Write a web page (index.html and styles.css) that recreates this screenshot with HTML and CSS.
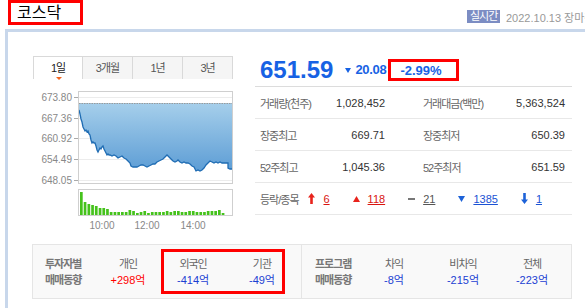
FILE: index.html
```html
<!DOCTYPE html>
<html>
<head>
  <title>코스닥</title>
  <link rel="stylesheet" href="styles.css">
</head>
<body>
  <div class="header">
    <h1 class="title">코스닥</h1>
    <div class="meta">
      <span class="badge">실시간</span>
      <span class="date">2022.10.13 장마감</span>
    </div>
  </div>

  <div class="board">
    <div class="top">
      <div class="chart-col">
        <div class="tabs">
          <div class="tab active">1일</div>
          <div class="tab">3개월</div>
          <div class="tab">1년</div>
          <div class="tab">3년</div>
        </div>
        <svg class="chart" width="200" height="150" viewBox="33 83 200 150">
          <defs>
            <linearGradient id="areaFill" x1="0" y1="0" x2="0" y2="1">
              <stop offset="0" stop-color="#a6cfeb"/>
              <stop offset="1" stop-color="#5d9dd5"/>
            </linearGradient>
          </defs>
          <!-- grid -->
          <g stroke="#ececec">
            <line x1="79" x2="232" y1="97.5" y2="97.5"/>
            <line x1="79" x2="232" y1="118.5" y2="118.5"/>
            <line x1="79" x2="232" y1="138.5" y2="138.5"/>
            <line x1="79" x2="232" y1="159.5" y2="159.5"/>
            <line x1="79" x2="232" y1="180.5" y2="180.5"/>
          </g>
          <g stroke="#aaa">
            <line x1="74" x2="78" y1="97.5" y2="97.5"/>
            <line x1="74" x2="78" y1="118.5" y2="118.5"/>
            <line x1="74" x2="78" y1="138.5" y2="138.5"/>
            <line x1="74" x2="78" y1="159.5" y2="159.5"/>
            <line x1="74" x2="78" y1="180.5" y2="180.5"/>
          </g>
          <g class="axis" text-anchor="end">
            <text x="72" y="101">673.80</text>
            <text x="72" y="122">667.36</text>
            <text x="72" y="142">660.92</text>
            <text x="72" y="163">654.49</text>
            <text x="72" y="184">648.05</text>
          </g>
          <!-- price -->
          <path fill="url(#areaFill)" d="M79,103 L79,110 80,114 81,119 82,122 83,127 84,129 85,131 86,130 87,132 88,131 89,134 90,135 91,140 92,143 93,142 94,143 95,143 96,146 97,150 98,152 99,150 100,148 101,149 102,147 103,146 104,149 105,151 106,153 107,155 108,154 109,155 110,155 112,156 114,155 116,156 118,158 120,157 122,156 124,158 126,159 128,161 130,163 131,166 133,167 135,167 137,167 139,166 141,165 143,165 145,166 147,167 149,166 151,165 153,164 155,164 157,162 159,161 161,160 163,159 165,157 167,155 169,157 171,159 173,161 175,162 177,161 178,160 180,162 182,163 184,162 186,163 188,163 190,164 192,166 194,167 196,171 198,170 200,171 202,170 204,168 206,165 208,163 210,161 212,162 214,163 216,162 218,163 220,162 222,163 224,163 226,163 228,163 228,168 230,169 232,169 L232,103 Z"/>
          <path fill="none" stroke="#1f6cb3" stroke-width="1.3" d="M79,110 80,114 81,119 82,122 83,127 84,129 85,131 86,130 87,132 88,131 89,134 90,135 91,140 92,143 93,142 94,143 95,143 96,146 97,150 98,152 99,150 100,148 101,149 102,147 103,146 104,149 105,151 106,153 107,155 108,154 109,155 110,155 112,156 114,155 116,156 118,158 120,157 122,156 124,158 126,159 128,161 130,163 131,166 133,167 135,167 137,167 139,166 141,165 143,165 145,166 147,167 149,166 151,165 153,164 155,164 157,162 159,161 161,160 163,159 165,157 167,155 169,157 171,159 173,161 175,162 177,161 178,160 180,162 182,163 184,162 186,163 188,163 190,164 192,166 194,167 196,171 198,170 200,171 202,170 204,168 206,165 208,163 210,161 212,162 214,163 216,162 218,163 220,162 222,163 224,163 226,163 228,163 228,168 230,169 232,169"/>
          <line x1="79" x2="232" y1="103.5" y2="103.5" stroke="#9a9a9a" stroke-dasharray="1.5 1"/>
          <rect x="78.5" y="91.5" width="154" height="92" fill="none" stroke="#cfcfcf"/>
          <!-- volume -->
          <rect x="78.5" y="189.5" width="154" height="26" fill="none" stroke="#cfcfcf"/>
          <g fill="#45c21c">
            <rect x="80" y="192" width="2.7" height="23"/>
            <rect x="83.7" y="202" width="2.7" height="13"/>
            <rect x="87.5" y="204" width="2.7" height="11"/>
            <rect x="91.2" y="205" width="2.7" height="10"/>
            <rect x="94.9" y="206" width="2.7" height="9"/>
            <rect x="98.7" y="208" width="2.7" height="7"/>
            <rect x="102.4" y="208" width="2.7" height="7"/>
            <rect x="106.1" y="209" width="2.7" height="6"/>
            <rect x="109.8" y="212" width="2.7" height="3"/>
            <rect x="113.6" y="212" width="2.7" height="3"/>
            <rect x="117.3" y="212" width="2.7" height="3"/>
            <rect x="121" y="212" width="2.7" height="3"/>
            <rect x="124.8" y="212" width="2.7" height="3"/>
            <rect x="128.5" y="210" width="2.7" height="5"/>
            <rect x="132.2" y="211" width="2.7" height="4"/>
            <rect x="136" y="213" width="2.7" height="2"/>
            <rect x="139.7" y="212" width="2.7" height="3"/>
            <rect x="143.4" y="211" width="2.7" height="4"/>
            <rect x="147.1" y="213" width="2.7" height="2"/>
            <rect x="150.9" y="212" width="2.7" height="3"/>
            <rect x="154.6" y="212" width="2.7" height="3"/>
            <rect x="158.3" y="212" width="2.7" height="3"/>
            <rect x="162.1" y="212" width="2.7" height="3"/>
            <rect x="165.8" y="211" width="2.7" height="4"/>
            <rect x="169.5" y="212" width="2.7" height="3"/>
            <rect x="173.3" y="211" width="2.7" height="4"/>
            <rect x="177" y="211" width="2.7" height="4"/>
            <rect x="180.7" y="212" width="2.7" height="3"/>
            <rect x="184.4" y="212" width="2.7" height="3"/>
            <rect x="188.2" y="211" width="2.7" height="4"/>
            <rect x="191.9" y="211" width="2.7" height="4"/>
            <rect x="195.6" y="212" width="2.7" height="3"/>
            <rect x="199.4" y="212" width="2.7" height="3"/>
            <rect x="203.1" y="212" width="2.7" height="3"/>
            <rect x="206.8" y="211" width="2.7" height="4"/>
            <rect x="210.6" y="211" width="2.7" height="4"/>
            <rect x="214.3" y="211" width="2.7" height="4"/>
            <rect x="218" y="210" width="2.7" height="5"/>
            <rect x="221.7" y="213" width="2.7" height="2"/>
          </g>
          <g class="axis" text-anchor="middle">
            <text x="102" y="229">10:00</text>
            <text x="147" y="229">12:00</text>
            <text x="193" y="229">14:00</text>
          </g>
        </svg>
      </div>

      <div class="info">
        <div class="price-row">
          <span class="price">651.59</span>
          <span class="change">
            <svg class="tri" width="6" height="5" viewBox="0 0 6 5"><path d="M0 0H6L3 5Z" fill="#1762e4"/></svg>20.08
          </span>
          <span class="rate">-2.99%</span>
        </div>
        <div class="row">
          <span class="label">거래량(천주)</span>
          <span class="val">1,028,452</span>
          <span class="label label2">거래대금(백만)</span>
          <span class="val">5,363,524</span>
        </div>
        <div class="row">
          <span class="label">장중최고</span>
          <span class="val">669.71</span>
          <span class="label label2">장중최저</span>
          <span class="val">650.39</span>
        </div>
        <div class="row">
          <span class="label">52주최고</span>
          <span class="val">1,045.36</span>
          <span class="label label2">52주최저</span>
          <span class="val">651.59</span>
        </div>
        <div class="row updown">
          <span class="label">등락/종목</span>
          <span class="ud">
            <svg width="7" height="11" viewBox="0 0 7 11"><path d="M3.5 0L7 4.5H4.8V11H2.2V4.5H0Z" fill="#e8231c"/></svg>
            <a class="num red">6</a>
          </span>
          <span class="ud">
            <svg width="7" height="6" viewBox="0 0 7 6"><path d="M3.5 0L7 6H0Z" fill="#e8231c"/></svg>
            <a class="num red">118</a>
          </span>
          <span class="ud">
            <svg width="7" height="2" viewBox="0 0 7 2"><rect width="7" height="2" fill="#777"/></svg>
            <a class="num gray">21</a>
          </span>
          <span class="ud">
            <svg width="7" height="6" viewBox="0 0 7 6"><path d="M0 0H7L3.5 6Z" fill="#1d62d8"/></svg>
            <a class="num blue">1385</a>
          </span>
          <span class="ud">
            <svg width="7" height="11" viewBox="0 0 7 11"><path d="M3.5 11L7 6.5H4.8V0H2.2V6.5H0Z" fill="#1d62d8"/></svg>
            <a class="num blue">1</a>
          </span>
        </div>
      </div>
    </div>

    <div class="investors">
      <div class="inv-half inv-left">
        <div class="inv-label">투자자별<br>매매동향</div>
        <div class="inv-item person">
          <span class="name">개인</span>
          <span class="plus">+298억</span>
        </div>
        <div class="highlight">
          <div class="inv-item">
            <span class="name">외국인</span>
            <span class="minus">-414억</span>
          </div>
          <div class="inv-item">
            <span class="name">기관</span>
            <span class="minus">-49억</span>
          </div>
        </div>
      </div>
      <div class="inv-half inv-right">
        <div class="inv-label">프로그램<br>매매동향</div>
        <div class="inv-item">
          <span class="name">차익</span>
          <span class="minus">-8억</span>
        </div>
        <div class="inv-item">
          <span class="name">비차익</span>
          <span class="minus">-215억</span>
        </div>
        <div class="inv-item">
          <span class="name">전체</span>
          <span class="minus">-223억</span>
        </div>
      </div>
    </div>
  </div>
</body>
</html>
```

FILE: styles.css
```css
* {
  box-sizing: border-box;
  margin: 0;
  padding: 0;
}

body {
  font-family: "Liberation Sans", "Noto Sans CJK KR", sans-serif;
  font-size: 11px;
  color: #333;
  background-color: #fff;
  width: 585px;
  height: 308px;
  overflow: hidden;
}

.header {
  display: flex;
  height: 29px;
}

.title {
  flex-shrink: 0;
  margin-left: 8px;
  width: 75px;
  height: 25px;
  border: 3px solid #f00;
  padding-left: 6px;
  font-size: 16px;
  font-weight: normal;
  line-height: 19px;
  color: #000;
}

.meta {
  display: flex;
  align-items: center;
  flex-shrink: 0;
  margin-left: 384px;
  margin-top: 10px;
  height: 13px;
  white-space: nowrap;
}

.badge {
  display: inline-block;
  width: 33px;
  height: 13px;
  line-height: 13px;
  padding-left: 3px;
  background-color: #7c8dc3;
  color: #fff;
  letter-spacing: -1px;
}

.date {
  margin-left: 6px;
  color: #999;
}

.board {
  margin-left: 5px;
  width: 600px;
  height: 279px;
  border-top: 3px solid #c8d7eb;
  border-left: 3px solid #c8d7eb;
  padding: 24px 0 0 25px;
}

.top {
  display: flex;
}

.chart-col {
  width: 200px;
}

.tabs {
  display: flex;
  height: 23px;
}

.tab {
  position: relative;
  width: 50px;
  border: 1px solid #d9d9d9;
  border-bottom: none;
  border-left: none;
  background-color: #f5f5f5;
  color: #555;
  text-align: center;
  line-height: 22px;
  letter-spacing: -1px;
}

.tab:first-child {
  border-left: 1px solid #d9d9d9;
}

.tab.active {
  background-color: #fff;
  color: #222;
}

.tab.active::after {
  content: "";
  position: absolute;
  left: 22px;
  bottom: -1px;
  border-left: 3px solid transparent;
  border-right: 3px solid transparent;
  border-top: 3px solid #f4641c;
}

.chart {
  display: block;
  margin-top: 4px;
}

.axis {
  font-family: "Liberation Sans", sans-serif;
  font-size: 10px;
  fill: #888;
}

.info {
  margin-left: 22px;
  width: 317px;
}

.price-row {
  display: flex;
  align-items: center;
  height: 31px;
  padding: 0 0 3px 5px;
  border-bottom: 1px solid #dcdcdc;
  color: #1762e4;
  font-weight: bold;
}

.price {
  font-size: 24px;
  line-height: 24px;
}

.change {
  margin-left: 12px;
  font-size: 13px;
  line-height: 16px;
  letter-spacing: -0.3px;
}

.change .tri {
  margin-right: 4px;
  vertical-align: 1px;
}

.rate {
  margin-left: 2px;
  width: 71px;
  height: 22px;
  border: 3px solid #f00;
  padding-left: 9px;
  font-size: 13px;
  line-height: 17px;
}

.row {
  display: grid;
  grid-template-columns: 60px 65px 1fr auto;
  align-items: center;
  height: 32px;
  padding: 0 7px 0 5px;
  border-bottom: 1px solid #e8e8e8;
}

.label {
  color: #666;
  letter-spacing: -1px;
}

.label2 {
  padding-left: 38px;
}

.val {
  text-align: right;
  color: #333;
}

.row.updown {
  display: flex;
}

.updown .label {
  width: 67px;
}

.ud {
  display: flex;
  align-items: center;
  margin-right: 23px;
}

.ud svg {
  margin-right: 8px;
}

.num {
  text-decoration: underline;
}

.num.red {
  color: #d9140f;
}

.num.gray {
  color: #555;
}

.num.blue {
  color: #1a52d4;
}

.investors {
  display: flex;
  margin-top: 11px;
  margin-left: -1px;
  width: 540px;
  height: 55px;
  border: 1px solid #e5e5e5;
  background-color: #f9f9f9;
}

.inv-half {
  display: flex;
  align-items: center;
  height: 100%;
}

.inv-left {
  width: 269px;
  padding-left: 12px;
  border-right: 1px solid #e5e5e5;
}

.inv-right {
  display: grid;
  grid-template-columns: 52px 54px 84px 54px;
  padding-left: 13px;
}

.inv-label {
  width: 52px;
  font-weight: bold;
  color: #777;
  line-height: 16px;
  letter-spacing: -1px;
}

.inv-item {
  display: flex;
  flex-direction: column;
  align-items: center;
  line-height: 16px;
}

.inv-item.person {
  width: 62px;
}

.inv-item .name {
  color: #666;
  letter-spacing: -1px;
}

.plus {
  color: #f00;
}

.minus {
  color: #1b3fd3;
}

.highlight {
  display: flex;
  justify-content: space-between;
  align-items: center;
  margin-left: 2px;
  width: 124px;
  height: 45px;
  border: 3px solid #f00;
  padding: 0 7px 0 13px;
}
```
